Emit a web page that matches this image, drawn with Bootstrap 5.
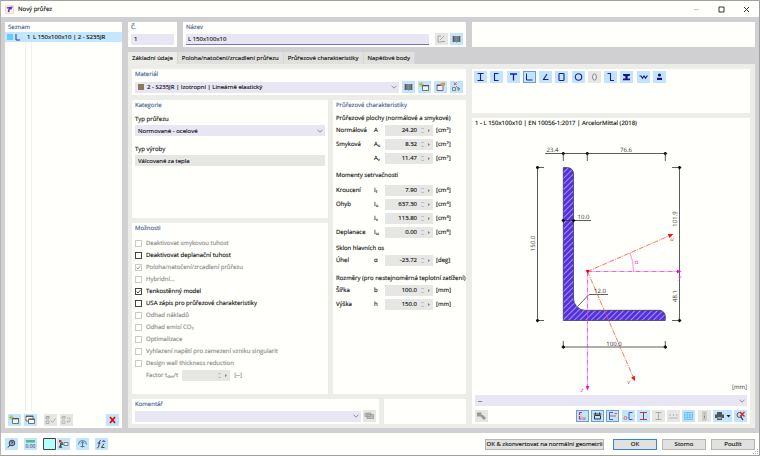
<!DOCTYPE html>
<html lang="cs">
<head>
<meta charset="utf-8">
<meta name="viewport" content="width=device-width, initial-scale=1">
<title>Nový průřez</title>
<link href="https://cdn.jsdelivr.net/npm/bootstrap@5.3.0/dist/css/bootstrap.min.css" rel="stylesheet">
<style>
:root{--paper:#fffffc;--frame:#d0d0d2;--tabbg:#ecece9;--field:#e8e6f2;--dis:#e6e6e5;--tool:#c2e4fc;--head:#4a6592}
body{font-family:"Open Sans","Noto Sans",sans-serif;font-size:6px;line-height:8px;color:#141414;background:var(--paper);text-rendering:geometricPrecision;-webkit-text-stroke:.15px}
.window{min-height:100vh;border:1px solid #a0a0a2;border-left-color:#b4b4b6}
.titlebar{height:16px;padding-left:4px}
.titlebar h1{font-size:6px;line-height:8px;margin:0;font-weight:400}
.titlebar .ctl{width:25px;height:14px}
button{font:inherit;color:inherit}
.ctl,.tool{border:0;background:none;padding:0;display:flex;align-items:center;justify-content:center}
.workspace{background:var(--frame);display:grid;grid-template-columns:minmax(0,117fr) minmax(0,627fr);gap:6px;padding:5px 4px;flex:1}
.pane{background:var(--paper);padding:1px 3px 2px;min-width:0}
.pane h2,.fhead{font-size:6px;line-height:8px;margin:0;font-weight:400}
.pane h2{color:var(--head)}
.line{display:flex;align-items:center;gap:2px;margin-top:2px;height:12px}
.material .line{margin-top:3px;gap:3px}
.toprow{display:grid;grid-template-columns:minmax(0,49fr) minmax(0,283fr) minmax(0,283fr);gap:6px}
.field{background:var(--field);border:0;border-radius:0;height:11px;width:100%;min-width:0;padding:0 3px;font:inherit;color:inherit;outline:0}
.field.hot{border-bottom:1px solid #7e74b8;padding:0 2px}
.field:disabled{background:var(--dis);color:inherit;opacity:1}
select.field{appearance:none;background:var(--field) url("data:image/svg+xml,%3Csvg xmlns='http://www.w3.org/2000/svg' viewBox='0 0 6 4'%3E%3Cpath d='M.5.7 3 3.2 5.5.7' fill='none' stroke='%23777' stroke-width='.8'/%3E%3C/svg%3E") no-repeat right 2px center/6px 4px}
.mat-field{padding-left:12px}
.mat-chip{left:3px}
.tool{width:13px;height:12px;background:var(--tool);flex:none}
.tool svg{width:13px;height:12px}
.tool:disabled{background:#e6e6e5}
.tool.on{outline:1px solid #6a9fd0;outline-offset:-1px}
.tool.menu{width:19px}
.tool.menu svg+svg{width:6px}
.list-title{padding:0 3px 1px}
.list-item{display:grid;grid-template-columns:8px 12px 6px 1fr;height:10px;background:#c2e7ff;border:0;padding:0 2px;align-items:center;text-align:left;width:100%}
.list-tools{display:flex;gap:3px;padding:3px 3px 0}
.swatch{width:6px;height:6px;background:#66ccff}
.cols{margin-left:20px;width:7px;border:solid #f0f0ec;border-width:0 1px}
.tabs{margin-top:5px;display:flex}
.tabs button{border:0;border-right:1px solid #d6d6d5;background:#e0e0df;height:12px;padding:0 4px;border-radius:0}
.tabs button.active{background:var(--tabbg)}
.sheet{background:var(--tabbg);display:grid;grid-template-columns:minmax(0,334fr) minmax(0,278fr);gap:6px;padding:5px 5px 4px 4px}
.stack{display:flex;flex-direction:column;gap:5px;min-width:0}
.middle{display:grid;grid-template-columns:minmax(0,196fr) minmax(0,133fr);gap:5px;flex:1}
.foot{display:grid;grid-template-columns:minmax(0,247fr) minmax(0,82fr);gap:5px}
.category{min-height:118px}
.category>label{display:block;margin:6px 0 2px}
.category>select+label{margin-top:9px}
.options h2{margin-bottom:5px}
.opt{display:flex;align-items:center;height:12px;gap:4px}
.opt.inner{padding-left:11px}
.opt input[type=checkbox]{appearance:none;width:7px;height:7px;margin:0;border:1px solid #444;background:var(--paper);flex:none}
.opt input[type=checkbox]:checked{background:url("data:image/svg+xml,%3Csvg xmlns='http://www.w3.org/2000/svg' viewBox='0 0 5 5'%3E%3Cpath d='M.5 2.5 2 4 4.6.8' fill='none' stroke='%23333' stroke-width='.8'/%3E%3C/svg%3E") center/5px 5px no-repeat}
.opt input[type=checkbox]:disabled{border-color:#ccc}
.opt input[type=checkbox]:disabled:checked{opacity:.6;border-color:#aaa}
.opt input:disabled+label,.opt.inner{color:#8c8c8c}
.fhead{margin:5px 0 1px;white-space:nowrap}
.fhead.spaced{margin:6px 0 4px}
.fhead.lower{margin-top:7px}
.prop{display:grid;grid-template-columns:38px 11px 48px 1fr;height:14px;align-items:center}
.prop>span:last-child{padding-left:3px}
.num{display:flex;align-items:center;background:var(--dis);height:11px;width:48px}
.num input{width:33px;border:0;background:none;padding:0 1px 0 0;text-align:right;font:inherit;color:inherit;flex:none;height:11px}
.num svg{width:14px;height:11px}
sub,sup{font-size:4px;line-height:0}
.shapes{display:flex;justify-content:space-between;max-width:192px}
.shapebox{min-height:44px;padding:2px}
.drawing{display:block;width:100%;flex:1;min-height:0}
.drawing text{font-size:6px;fill:#333}
.viewbar{margin-top:4px}
.views{display:flex;justify-content:space-between;width:171px}
.footerbar{min-height:22px;padding:0 4px;position:relative}
.fgroup{display:flex;gap:6px}
.pair{display:flex;gap:1px}
.dlg{border:1px solid #b4b4b4;background:#e1e1e0;height:11px;padding:0;line-height:8px;width:44px;border-radius:0;white-space:nowrap}
.dlg.wide{width:119px;margin-right:4px}
.dlg.ok{outline:1px solid #2f86dc;border-color:#2f86dc;outline-offset:-1px}
.acts{gap:5px}
.grip{right:1px;bottom:1px}
</style>
<script src="https://cdn.jsdelivr.net/npm/bootstrap@5.3.0/dist/js/bootstrap.bundle.min.js"></script>
</head>
<body>
<svg width="0" height="0" class="position-absolute" aria-hidden="true">
<defs>
<symbol id="book" viewBox="0 0 13 12"><path d="M2.500 3h3.500v6H2.500zM7 3h3.500v6H7z" fill="#76818a"/><path d="M6.500 3v6.600M3.600 3v6M9.400 3v6" stroke="#333" stroke-width=".5"/></symbol>
<symbol id="new" viewBox="0 0 13 12"><path d="M4.500 4.500h6v5h-6z" fill="#f4f4ee" stroke="#555" stroke-width=".8"/><path d="M4.200 4.800h6.600" stroke="#444"/><path d="M3.200 1v5M.8 3.500h5M1.500 1.800l3.400 3.400M4.900 1.800 1.500 5.200" stroke="#9ab82c" stroke-width=".7"/></symbol>
<symbol id="windows" viewBox="0 0 13 12"><path d="M2 2h7v5H2z" fill="#f8f8ff" stroke="#555" stroke-width=".8"/><path d="M2 2.400h7" stroke="#456"/><path d="M4.500 5h6v4.500h-6z" fill="#fff" stroke="#555" stroke-width=".8"/><path d="M4.500 5.300h6" stroke="#456"/></symbol>
<symbol id="spinner" viewBox="0 0 14 11"><path d="M3.500 4.200 4.600 3l1.100 1.200M3.500 6.800 4.600 8l1.100-1.200" fill="none" stroke="#888" stroke-width=".6"/><path d="M10 4v3.200l2-1.600z" fill="#888"/></symbol>
<marker id="arrow" viewBox="0 0 6 6" refX="3" refY="3" markerWidth="5" markerHeight="5" orient="auto" markerUnits="userSpaceOnUse"><path d="M0 .5 6 3 0 5.500z" fill="#ff1010"/></marker>
<marker id="arrowm" viewBox="0 0 6 6" refX="3" refY="3" markerWidth="5" markerHeight="5" orient="auto" markerUnits="userSpaceOnUse"><path d="M0 .5 6 3 0 5.500z" fill="#ff00d4"/></marker>
<marker id="dot" viewBox="0 0 4 4" refX="2" refY="2" markerWidth="4" markerHeight="4" markerUnits="userSpaceOnUse"><path d="M0 2 2 0 4 2 2 4z" fill="#111"/></marker>
<pattern id="hatch" width="4" height="4" patternUnits="userSpaceOnUse" patternTransform="rotate(45)"><path d="M0 0h4v4H0z" fill="#5530e0"/><path d="M0 0v4" stroke="#c8c0ff" stroke-width="1.400"/></pattern>
</defs>
</svg>
<div class="window d-flex flex-column">
<header class="titlebar d-flex align-items-center">
<svg width="9" height="9" viewBox="0 0 9 9" class="me-1 flex-shrink-0"><path d="M.5.5h8v8h-8z" fill="#fff4ec" stroke="#f0c4a4" stroke-width=".6"/><path d="M1.500 2.200 7.800 1.500 6.600 4.500 4.900 4.600 4.200 7.500 2.600 6.800 3.600 3.500 2 3.600z" fill="#5a35d8"/></svg>
<h1>Nový průřez</h1>
<div class="ms-auto d-flex">
<button class="ctl" aria-label="Minimalizovat"><svg width="7" height="7"><path d="M1 3.500h5" stroke="#ccc"/></svg></button>
<button class="ctl" aria-label="Maximalizovat"><svg width="7" height="7"><path d="M1 1h5v5H1z" fill="none" stroke="#333"/></svg></button>
<button class="ctl" aria-label="Zavřít"><svg width="7" height="7"><path d="m1 1 5 5M6 1 1 6" stroke="#333"/></svg></button>
</div>
</header>

<main class="workspace">
<aside class="pane d-flex flex-column px-0">
<h2 class="list-title">Seznam</h2>
<button class="list-item"><span class="swatch"></span><svg width="6" height="8"><path d="M1 1v6h4" fill="none" stroke="#2436a8"/></svg><span>1</span><span>L 150x100x10 | 2 - S235JR</span></button>
<div class="cols flex-grow-1"></div>
<div class="list-tools">
<button class="tool" aria-label="Nový"><svg><use href="#new"/></svg></button>
<button class="tool" aria-label="Kopírovat"><svg><use href="#windows"/></svg></button>
<button class="tool ms-1" disabled aria-label="Vybrat vše"><svg viewBox="0 0 13 12"><path d="M2 2.500h3v2.500H2zM2 7h3v2.500H2zM2.500 3l1 1 2-2M6.500 6.500l2 2 3-4" fill="none" stroke="#999" stroke-width=".7"/></svg></button>
<button class="tool" disabled aria-label="Obrátit výběr"><svg viewBox="0 0 13 12"><path d="M2 2.500h3v2.500H2zM2 7h3v2.500H2zM2.500 3l1 1 2-2M7 4h3v3.500H7l1.200-1M7 7.500l1.200 1" fill="none" stroke="#aaa" stroke-width=".7"/></svg></button>
<button class="tool ms-auto" aria-label="Smazat"><svg viewBox="0 0 13 12"><path d="m4 3 5 6M9 3 4 9" stroke="#f00000" stroke-width="1.700"/></svg></button>
</div>
</aside>

<div class="d-flex flex-column">
<div class="toprow">
<section class="pane"><h2><label for="no">Č.</label></h2><div class="line"><input id="no" class="field" value="1"></div></section>
<section class="pane"><h2><label for="nm">Název</label></h2><div class="line"><input id="nm" class="field hot me-1" value="L 150x100x10"><button class="tool" disabled aria-label="Upravit název"><svg viewBox="0 0 13 12"><path d="M6 3H3v6h3M6 8.500h4M5 7l4-4" fill="none" stroke="#999" stroke-width=".8"/></svg></button><button class="tool" aria-label="Knihovna"><svg><use href="#book"/></svg></button></div></section>
<section class="pane"></section>
</div>
<nav class="tabs" role="tablist" aria-label="Karty">
<button role="tab" class="active">Základní údaje</button><button role="tab">Poloha/natočení/zrcadlení průřezu</button><button role="tab">Průřezové charakteristiky</button><button role="tab">Napěťové body</button>
</nav>
<div class="sheet flex-grow-1">
<div class="stack">
<section class="pane material"><h2><label for="mat">Materiál</label></h2>
<div class="line"><div class="d-flex flex-grow-1 align-items-center position-relative"><select id="mat" class="field mat-field"><option>2 - S235JR | Izotropní | Lineárně elastický</option></select><svg class="position-absolute mat-chip" width="6" height="6"><path d="M0 0h6v6H0z" fill="#8c7a5e"/></svg></div>
<button class="tool" aria-label="Knihovna materiálů"><svg><use href="#book"/></svg></button><button class="tool" aria-label="Nový materiál"><svg><use href="#new"/></svg></button><button class="tool" aria-label="Upravit materiál"><svg viewBox="0 0 13 12"><path d="M3 4h6v5.500H3z" fill="#eef" stroke="#555" stroke-width=".8"/><path d="M3 4.300h6" stroke="#444"/><path d="M5 3.500 8 1.500h3v3L8 5z" fill="#d49a5c"/></svg></button><button class="tool" aria-label="Smazat materiál"><svg viewBox="0 0 13 12"><path d="M2.500 6.500h3v3h-3zM6 5l2.500 2.500M8 6.500l2 1.500-2 1.500z" fill="none" stroke="#777" stroke-width=".9"/><path d="m4 1.500 2.500 2.500M6.500 1.500 4 4" stroke="#e44"/></svg></button></div></section>
<div class="middle">
<div class="stack">
<section class="pane category"><h2>Kategorie</h2>
<label for="typ">Typ průřezu</label><select id="typ" class="field d-block"><option>Normované - ocelové</option></select>
<label for="vyr">Typ výroby</label><input id="vyr" class="field d-block" disabled value="Válcované za tepla"></section>
<section class="pane options flex-grow-1"><h2>Možnosti</h2>
<div class="opt"><input type="checkbox" id="o1" disabled><label for="o1">Deaktivovat smykovou tuhost</label></div>
<div class="opt"><input type="checkbox" id="o2"><label for="o2">Deaktivovat deplanační tuhost</label></div>
<div class="opt"><input type="checkbox" id="o3" disabled checked><label for="o3">Poloha/natočení/zrcadlení průřezu</label></div>
<div class="opt"><input type="checkbox" id="o4" disabled><label for="o4">Hybridní...</label></div>
<div class="opt"><input type="checkbox" id="o5" checked><label for="o5">Tenkostěnný model</label></div>
<div class="opt"><input type="checkbox" id="o6"><label for="o6">USA zápis pro průřezové charakteristiky</label></div>
<div class="opt"><input type="checkbox" id="o7" disabled><label for="o7">Odhad nákladů</label></div>
<div class="opt"><input type="checkbox" id="o8" disabled><label for="o8">Odhad emisí CO<sub>2</sub></label></div>
<div class="opt"><input type="checkbox" id="o9" disabled><label for="o9">Optimalizace</label></div>
<div class="opt"><input type="checkbox" id="o10" disabled><label for="o10">Vyhlazení napětí pro zamezení vzniku singularit</label></div>
<div class="opt"><input type="checkbox" id="o11" disabled><label for="o11">Design wall thickness reduction</label></div>
<div class="opt inner"><label for="fac">Factor t<sub>des</sub>/t</label><div class="num"><input id="fac" disabled><svg><use href="#spinner"/></svg></div><span>[--]</span></div>
</section>
</div>
<section class="pane"><h2>Průřezové charakteristiky</h2>
<h3 class="fhead">Průřezové plochy (normálové a smykové)</h3>
<div class="prop"><label for="p1">Normálová</label><span>A</span><span class="num"><input id="p1" readonly value="24.20"><svg><use href="#spinner"/></svg></span><span>[cm<sup>2</sup>]</span></div>
<div class="prop"><label for="p2">Smyková</label><span>A<sub>u</sub></span><span class="num"><input id="p2" readonly value="8.32"><svg><use href="#spinner"/></svg></span><span>[cm<sup>2</sup>]</span></div>
<div class="prop"><span></span><label for="p3">A<sub>v</sub></label><span class="num"><input id="p3" readonly value="11.47"><svg><use href="#spinner"/></svg></span><span>[cm<sup>2</sup>]</span></div>
<h3 class="fhead spaced">Momenty setrvačnosti</h3>
<div class="prop"><label for="p4">Kroucení</label><span>I<sub>t</sub></span><span class="num"><input id="p4" readonly value="7.90"><svg><use href="#spinner"/></svg></span><span>[cm<sup>4</sup>]</span></div>
<div class="prop"><label for="p5">Ohyb</label><span>I<sub>u</sub></span><span class="num"><input id="p5" readonly value="637.30"><svg><use href="#spinner"/></svg></span><span>[cm<sup>4</sup>]</span></div>
<div class="prop"><span></span><label for="p6">I<sub>v</sub></label><span class="num"><input id="p6" readonly value="113.80"><svg><use href="#spinner"/></svg></span><span>[cm<sup>4</sup>]</span></div>
<div class="prop"><label for="p7">Deplanace</label><span>I<sub>ω</sub></span><span class="num"><input id="p7" readonly value="0.00"><svg><use href="#spinner"/></svg></span><span>[cm<sup>6</sup>]</span></div>
<h3 class="fhead">Sklon hlavních os</h3>
<div class="prop"><label for="p8">Úhel</label><span>α</span><span class="num"><input id="p8" readonly value="-23.72"><svg><use href="#spinner"/></svg></span><span>[deg]</span></div>
<h3 class="fhead lower">Rozměry (pro nestejnoměrná teplotní zatížení)</h3>
<div class="prop"><label for="p9">Šířka</label><span>b</span><span class="num"><input id="p9" readonly value="100.0"><svg><use href="#spinner"/></svg></span><span>[mm]</span></div>
<div class="prop"><label for="p10">Výška</label><span>h</span><span class="num"><input id="p10" readonly value="150.0"><svg><use href="#spinner"/></svg></span><span>[mm]</span></div>
</section>
</div>
<div class="foot">
<section class="pane"><h2><label for="kom">Komentář</label></h2><div class="line"><select id="kom" class="field"><option></option></select><button class="tool" disabled aria-label="Komentáře"><svg viewBox="0 0 13 12"><path d="M2 3h6v3.500H2zM4 4.500h6.500v4H4z" fill="#bbb" stroke="#999" stroke-width=".7"/></svg></button></div></section>
<section class="pane"></section>
</div>
</div>

<div class="stack">
<section class="pane shapebox"><div class="shapes">
<button class="tool" aria-label="I"><svg viewBox="0 0 13 12"><path d="M3.500 2.500h6M3.500 9.500h6M6.500 2.500v7" stroke="#1c1c9c" stroke-width="1.100"/></svg></button>
<button class="tool" aria-label="U"><svg viewBox="0 0 13 12"><path d="M8.500 2.500h-4v7h4" fill="none" stroke="#1c1c9c" stroke-width="1.100"/></svg></button>
<button class="tool" aria-label="T"><svg viewBox="0 0 13 12"><path d="M3 3h7M6.500 3v6.500" stroke="#1c1c9c" stroke-width="1.300"/></svg></button>
<button class="tool on" aria-label="L"><svg viewBox="0 0 13 12"><path d="M3.500 2.500v6.500h6" fill="none" stroke="#1c1c9c"/></svg></button>
<button class="tool" aria-label="Úhelník"><svg viewBox="0 0 13 12"><path d="M8 3 4.500 8.500h5" fill="none" stroke="#1c1c9c" stroke-width="1.100"/></svg></button>
<button class="tool" aria-label="Obdélník"><svg viewBox="0 0 13 12"><rect x="4" y="2.500" width="5" height="7" rx=".8" fill="none" stroke="#1c1c9c" stroke-width="1.100"/></svg></button>
<button class="tool" aria-label="Kruh"><svg viewBox="0 0 13 12"><circle cx="6.500" cy="6" r="3.200" fill="none" stroke="#1c1c9c" stroke-width="1.100"/></svg></button>
<button class="tool" disabled aria-label="Elipsa"><svg viewBox="0 0 13 12"><ellipse cx="6.500" cy="6" rx="2" ry="3.200" fill="none" stroke="#888" stroke-width=".9"/></svg></button>
<button class="tool" aria-label="Z"><svg viewBox="0 0 13 12"><path d="M3.500 2.500h3v7h3.500" fill="none" stroke="#1c1c9c" stroke-width="1.100"/></svg></button>
<button class="tool" aria-label="Kolejnice"><svg viewBox="0 0 13 12"><path d="M3 3h7v1.500L7.600 5.500v2H10v1.800H3V7.500h2.400v-2L3 4.500z" fill="#14148c"/></svg></button>
<button class="tool" aria-label="Vlnitý"><svg viewBox="0 0 13 12"><path d="M2.500 5 4 5l1.500 2.200L7 5l1.500 2.200L10 5h.8" fill="none" stroke="#1c1c9c" stroke-width="1.200"/></svg></button>
<button class="tool" aria-label="Ostatní"><svg viewBox="0 0 13 12"><circle cx="6.500" cy="4" r="1.600" fill="#14148c"/><path d="M4 6.800h5v2.200H4z" fill="#14148c"/></svg></button>
</div></section>
<section class="pane flex-grow-1 d-flex flex-column">
<div>1 - L 150x100x10 | EN 10056-1:2017 | ArcelorMittal (2018)</div>
<svg class="drawing" viewBox="475 128 272 266" role="img" aria-label="Průřez L 150x100x10">
<path d="M563.300 167.600h4.200a6 6 0 0 1 6 6V298a12 12 0 0 0 12 12.300h74a6 6 0 0 1 5.800 6v4.200h-102z" fill="url(#hatch)" stroke="#333" stroke-width=".7"/>
<g fill="none" stroke="#333" stroke-width=".8">
<path d="M545 153.500h18.300"/><path d="M563.300 153.500h24h78" marker-start="url(#dot)" marker-mid="url(#dot)" marker-end="url(#dot)"/>
<path d="M563.300 153.500v7.500M587.300 153.500v7.500M665.300 153.500v7.500M537 167.500h7M537 320.500h7M672 167.500h7M672 320.500h7M563.300 347v-6M665.300 347v-6M573.500 220.500H591M577.500 306.500 589 294.500h19M665.300 153.500h2"/>
<path d="M537.500 167.500v153" marker-start="url(#dot)" marker-end="url(#dot)"/>
<path d="M679.500 167.500v104v49" marker-start="url(#dot)" marker-end="url(#dot)"/>
<path d="M563.300 220.500h10.200" marker-start="url(#dot)" marker-end="url(#dot)"/>
<path d="M563.300 347h102" marker-start="url(#dot)" marker-end="url(#dot)"/>
</g>
<g fill="none" stroke-width=".8" stroke-dasharray="5 1 1 1">
<path d="M587.500 271.500V388" stroke="#ff30dc" marker-end="url(#arrowm)"/>
<path d="M587.500 271.500H679" stroke="#ff30dc" marker-end="url(#arrowm)"/>
<path d="M587.500 271.500 671 235" stroke="#ff5038" marker-end="url(#arrow)"/>
<path d="M587.500 271.500 634 379" stroke="#ff5038" marker-end="url(#arrow)"/>
</g>
<path d="M630 253q3.500 8 3.500 18.500" fill="none" stroke="#ff70e4" stroke-width=".8"/>
<path d="M585.500 270h4l-1.700 3.800z" fill="#f00000"/>
<g text-anchor="middle">
<text x="552.500" y="152">23.4</text><text x="626" y="152">76.6</text><text x="583.500" y="219">10.0</text><text x="600" y="293">12.0</text><text x="614" y="346">100.0</text>
<text transform="translate(535 243.500) rotate(-90)">150.0</text><text transform="translate(677 219) rotate(-90)">101.9</text><text transform="translate(677 296) rotate(-90)">48.1</text>
<g font-style="italic"><text x="672" y="241" style="fill:#ff3030">u</text><text x="629" y="384" style="fill:#ff3030">v</text><text x="680" y="279" style="fill:#ff20d8">y</text><text x="582" y="392" style="fill:#ff20d8">z</text></g><text x="636.500" y="264" style="fill:#ff20d8">α</text>
</g>
<text x="747" y="389" text-anchor="end">[mm]</text>
</svg>
<select class="field flex-shrink-0" aria-label="Zobrazení"><option>--</option></select>
<div class="viewbar d-flex justify-content-between">
<button class="tool" disabled aria-label="Nastavení"><svg viewBox="0 0 13 12"><path d="M2 2.500h4.500v4H2zM6 5h2l3 3-2 2-3-3z" fill="#999"/></svg></button>
<div class="views">
<button class="tool on" aria-label="Obrys"><svg viewBox="0 0 13 12"><path d="M6 2.500H3.500v6.500h6" fill="none" stroke="#e03040" stroke-width="1.200" stroke-dasharray="5 1"/><path d="M5 4v3.500h5" fill="none" stroke="#888" stroke-width=".4"/></svg></button>
<button class="tool on" aria-label="Kóty"><svg viewBox="0 0 13 12"><path d="M2.500 4h8M4.500 2.500v2M8.500 2.500v2M3.500 5.500h6V9h-6z" fill="none" stroke="#333"/></svg></button>
<button class="tool on" aria-label="Osy"><svg viewBox="0 0 13 12"><path d="M7 2.500H3.500v7H7" fill="none" stroke="#4a5bb4"/><path d="M4 6h6M8.500 3.500h2.500" stroke="#e03050" stroke-width=".8"/></svg></button>
<button class="tool" aria-label="Těžiště"><svg viewBox="0 0 13 12"><path d="M10.500 2.500H7v7h3.500" fill="none" stroke="#4a5bb4"/><circle cx="3.500" cy="8" r="1.500" fill="none" stroke="#e05060" stroke-width=".8"/></svg></button>
<button class="tool" aria-label="Profil"><svg viewBox="0 0 13 12"><path d="M3 2.500h7M3 9.500h7" stroke="#e03030"/><path d="M6.500 2.500v7" stroke="#555"/></svg></button>
<button class="tool" disabled aria-label="Profil 2"><svg viewBox="0 0 13 12"><path d="M3.500 2.500h6M3.500 9.500h6M6.500 2.500v7" stroke="#aaa"/></svg></button>
<button class="tool" disabled aria-label="Míry"><svg viewBox="0 0 13 12"><path d="M2 8h9M3 4v2M6.500 4v2M10 4v2" stroke="#aaa" stroke-width=".8"/></svg></button>
<button class="tool" aria-label="Rastr"><svg viewBox="0 0 13 12"><path d="M2.500 2.500h8v7h-8zM2.500 5h8M2.500 7.300h8M5.200 2.500v7M7.800 2.500v7" fill="none" stroke="#50b4f4" stroke-width=".7"/></svg></button>
<button class="tool" disabled aria-label="Informace"><svg viewBox="0 0 13 12"><path d="M5 2h3v8H5z" fill="none" stroke="#aaa" stroke-width=".8"/><path d="M6.500 3.500v1M6.500 5.500v3" stroke="#888"/></svg></button>
<button class="tool menu" aria-label="Tisk"><svg viewBox="0 0 13 12"><path d="M4 2h5v2.500H4zM2 4.500h9v3.500H2zM4 7h5v3H4z" fill="#555"/><path d="M4.500 8h4" stroke="#eee"/></svg><svg viewBox="0 0 6 12"><path d="M.5 5h4l-2 2.500z" fill="#222"/></svg></button>
<button class="tool" aria-label="Zobrazit vše"><svg viewBox="0 0 13 12"><circle cx="5.500" cy="5" r="2.500" fill="none" stroke="#555"/><path d="m7 7 2 3" stroke="#333" stroke-width="1.200"/><path d="m6 2 4.500 4.500M10.500 2 6 6.500" stroke="#e82020" stroke-width="1.300"/></svg></button>
</div>
</div>
</section>
</div>
</div>
</div>
</main>

<footer class="footerbar d-flex align-items-center">
<div class="fgroup">
<button class="tool" aria-label="Nápověda"><svg viewBox="0 0 13 12"><circle cx="7" cy="5" r="2.800" fill="#9ab" stroke="#445"/><path d="M6 4.300q1-1.200 1.800 0L7 5.500M5 7 3 9.500" fill="none" stroke="#333"/></svg></button>
<button class="tool" aria-label="Jednotky"><svg viewBox="0 0 13 12"><path d="M2 2h9v2.500H2z" fill="#58b888"/><text x="1.500" y="9.800" font-size="5" fill="#234">0.00</text></svg></button>
<div class="pair"><button class="tool" aria-label="Barva"><svg viewBox="0 0 13 12"><path d="M.5.500h12v11H.5z" fill="#b4ffff" stroke="#444"/></svg></button>
<button class="tool" aria-label="Strom"><svg viewBox="0 0 13 12"><path d="M2 2h2.500v2.500H2z" fill="#e03030"/><path d="M4 4h2v2H4z" fill="#30a030"/><path d="M3.500 5v5M3.500 6.500h3M2 10l1.500-3L5 10" fill="none" stroke="#333" stroke-width=".8"/><path d="M7 4.500h4v3H7z" fill="#eef" stroke="#556" stroke-width=".7"/></svg></button></div>
<button class="tool" aria-label="Obnovit"><svg viewBox="0 0 13 12"><path d="M2.500 6.500a4 4 0 0 1 8 0M5 5.500l1.500-2L8 5.500M6.500 4v5.500M4.500 8.500h4" fill="none" stroke="#567a9a"/></svg></button>
<button class="tool" aria-label="Funkce"><svg viewBox="0 0 13 12"><path d="M6 2.500C4 2 4.500 5 3.800 8S2 9.500 2 9.500M2.500 5h3M9.500 9.500h-3L9 5.500" fill="none" stroke="#333" stroke-width=".9"/><path d="M6.500 4h4.500L8.700 1.800z" fill="#66a"/></svg></button>
</div>
<div class="d-flex ms-auto align-items-center acts">
<button class="dlg wide">OK &amp; zkonvertovat na normální geometrii</button><button class="dlg ok">OK</button><button class="dlg">Storno</button><button class="dlg">Použít</button>
</div>
<svg class="position-absolute grip" width="5" height="5"><path d="M4 0h1v1H4zM2 2h1v1H2zM4 2h1v1H4zM0 4h1v1H0zM2 4h1v1H2zM4 4h1v1H4z" fill="#b8b8b8"/></svg>
</footer>
</div>
</body>
</html>
